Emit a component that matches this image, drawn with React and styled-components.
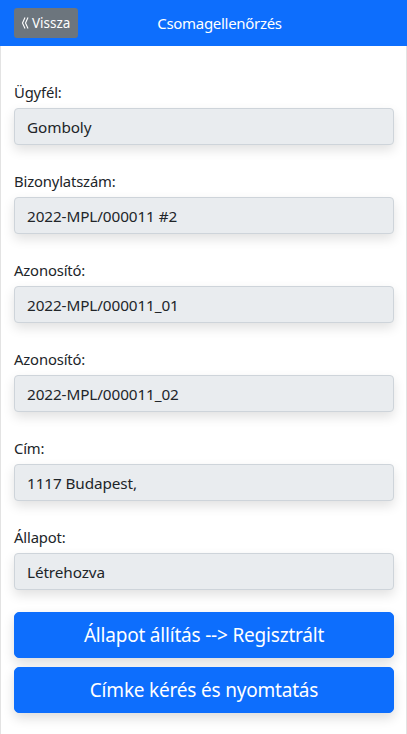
import React from "react";
import styled, { createGlobalStyle } from "styled-components";

const Global = createGlobalStyle`
  html, body { margin: 0; padding: 0; background: #fff; }
  body { font-family: "Noto Sans", "Open Sans", sans-serif; color: #212529; }
  * { box-sizing: border-box; }
`;

const Page = styled.div`
  width: 407px;
  min-height: 734px;
  display: flex;
  flex-direction: column;
  border-left: 1px solid #e3e3e3;
  border-right: 1px solid #e3e3e3;
`;

const Header = styled.header`
  height: 46px;
  margin: 0 -1px;
  background: #0d6efd;
  display: flex;
  align-items: center;
  padding: 0 46px 0 14px;
`;

const BackButton = styled.button`
  height: 30px;
  width: 64px;
  padding: 0 6px 0 7px;
  border: none;
  border-radius: 3px;
  background: #6c757d;
  color: #fff;
  font-family: inherit;
  font-size: 13.5px;
  display: flex;
  align-items: center;
  gap: 3px;
  cursor: pointer;
`;

const Title = styled.h1`
  flex: 1;
  margin: 0;
  text-align: center;
  color: #fff;
  font-size: 15px;
  font-weight: 400;
  letter-spacing: -0.3px;
`;

const Content = styled.main`
  display: flex;
  flex-direction: column;
  padding: 34px 12px 0 13px;
`;

const Field = styled.div`
  display: flex;
  flex-direction: column;
  gap: 4px;
  margin-bottom: 24px;
`;

const Label = styled.label`
  font-size: 14.8px;
  line-height: 24px;
  letter-spacing: -0.15px;
`;

const Value = styled.div`
  height: 37px;
  display: flex;
  align-items: center;
  padding: 0 12px;
  background: #e9ecef;
  border: 1px solid #ced4da;
  border-radius: 4px;
  font-size: 15.3px;
  letter-spacing: -0.1px;
  box-shadow: 0 5px 12px rgba(0, 0, 0, 0.12);
`;

const Actions = styled.div`
  display: flex;
  flex-direction: column;
  gap: 9px;
  margin-top: -2px;
`;

const ActionButton = styled.button`
  height: 46px;
  border: 1px solid #0d6efd;
  border-radius: 5px;
  background: #0d6efd;
  color: #fff;
  font-family: inherit;
  font-size: 19px;
  letter-spacing: -0.2px;
  box-shadow: 0 5px 12px rgba(0, 0, 0, 0.14);
  cursor: pointer;
`;

const ChevronsLeft = () => (
  <svg width="8" height="14" viewBox="0 0 8 14" fill="none" stroke="#fff" strokeWidth="1.1">
    <path d="M4 1.5 L1.5 7 L4 12.5" />
    <path d="M7 1.5 L4.5 7 L7 12.5" />
  </svg>
);

const fields = [
  ["Ügyfél:", "Gomboly"],
  ["Bizonylatszám:", "2022-MPL/000011 #2"],
  ["Azonosító:", "2022-MPL/000011_01"],
  ["Azonosító:", "2022-MPL/000011_02"],
  ["Cím:", "1117 Budapest,"],
  ["Állapot:", "Létrehozva"],
];

export default function App() {
  return (
    <>
      <Global />
      <Page>
        <Header>
          <BackButton>
            <ChevronsLeft />
            Vissza
          </BackButton>
          <Title>Csomagellenőrzés</Title>
        </Header>
        <Content>
          {fields.map(([label, value], i) => (
            <Field key={i}>
              <Label>{label}</Label>
              <Value>{value}</Value>
            </Field>
          ))}
          <Actions>
            <ActionButton>Állapot állítás --&gt; Regisztrált</ActionButton>
            <ActionButton>Címke kérés és nyomtatás</ActionButton>
          </Actions>
        </Content>
      </Page>
    </>
  );
}
